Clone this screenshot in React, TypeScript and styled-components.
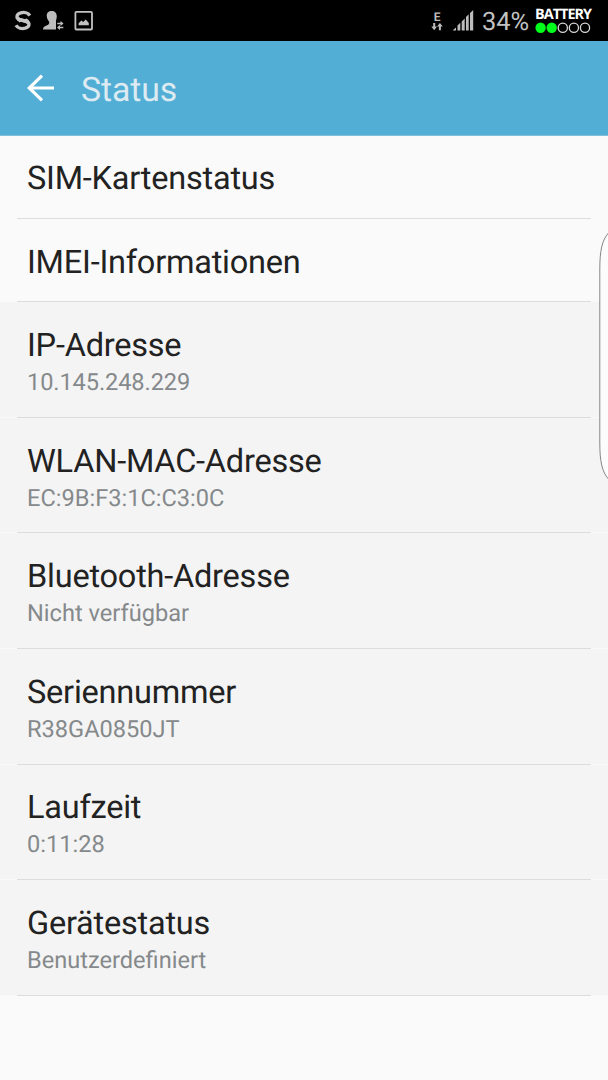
import React from 'react';
import styled, { createGlobalStyle } from 'styled-components';

const GlobalStyle = createGlobalStyle`
  * { box-sizing: border-box; }
  body {
    margin: 0;
    background: #fafafa;
    font-family: Roboto, sans-serif;
    text-rendering: geometricPrecision;
  }
`;

const Screen = styled.div`
  position: relative;
  width: 608px;
  height: 1080px;
  overflow: hidden;
  background: #fafafa;
`;

const StatusBar = styled.div`
  height: 41px;
  padding: 0 16px 0 14px;
  display: flex;
  align-items: center;
  justify-content: space-between;
  background: #000;
`;

const Cluster = styled.div`
  display: flex;
  align-items: center;
  height: 41px;
`;

const Percent = styled.span`
  margin-left: 8px;
  width: 46px;
  font-size: 25.4px;
  line-height: 41px;
  padding-top: 3px;
  white-space: nowrap;
  color: #c2c2c2;
`;

const Network = styled.div`
  margin-right: 9px;
  width: 14px;
  display: flex;
  flex-direction: column;
  align-items: center;
  font-size: 12px;
  font-weight: 700;
  line-height: 12px;
  color: #bcbcbc;
`;

const Battery = styled.div`
  margin-left: 7px;
  width: 57px;
  display: flex;
  flex-direction: column;
`;

const BatteryLabel = styled.span`
  font: 700 14.4px/14px 'Open Sans', sans-serif;
  letter-spacing: -0.95px;
  color: #fff;
  white-space: nowrap;
`;

const ActionBar = styled.header`
  height: 94.5px;
  padding: 0 27px;
  display: flex;
  align-items: center;
  gap: 26px;
  background: #52aed5;
  border-bottom: 1px solid #83bfda;
`;

const Heading = styled.h1`
  margin: 6px 0 0;
  font-size: 33.8px;
  font-weight: 400;
  line-height: 40px;
  letter-spacing: -0.1px;
  color: #dceaf1;
`;

const List = styled.ul`
  margin: 0;
  padding: 0;
  list-style: none;
`;

const Row = styled.li<{ $muted: boolean }>`
  height: ${(p) => (p.$muted ? 115.6 : 83.4)}px;
  padding: 0 17px;
  background: ${(p) => (p.$muted ? '#f4f4f4' : '#fafafa')};
  box-shadow: inset 0 -1px #f9f9f9;
`;

const RowBody = styled.div`
  height: 100%;
  padding: 23.8px 10px 0;
  border-bottom: 1px solid #dcdcdc;
`;

const Title = styled.div`
  font-size: 32.5px;
  line-height: 38px;
  letter-spacing: -0.22px;
  color: #222;
  white-space: nowrap;
`;

const Summary = styled.div<{ $numeric: boolean }>`
  margin-top: 4px;
  font-size: 23.6px;
  line-height: 28px;
  letter-spacing: ${(p) => (p.$numeric ? '-0.1px' : 'normal')};
  color: #85898b;
  white-space: nowrap;
`;

const EdgeHandle = styled.svg`
  position: absolute;
  top: 229px;
  right: 0;
`;

const rows: { title: string; summary?: string }[] = [
  { title: 'SIM-Kartenstatus' },
  { title: 'IMEI-Informationen' },
  { title: 'IP-Adresse', summary: '10.145.248.229' },
  { title: 'WLAN-MAC-Adresse', summary: 'EC:9B:F3:1C:C3:0C' },
  { title: 'Bluetooth-Adresse', summary: 'Nicht verfügbar' },
  { title: 'Seriennummer', summary: 'R38GA0850JT' },
  { title: 'Laufzeit', summary: '0:11:28' },
  { title: 'Gerätestatus', summary: 'Benutzerdefiniert' },
];

const NotificationIcons = () => (
  <svg width="82" height="41" viewBox="14 0 82 41" fill="none">
    <g stroke="#c4c4c4" strokeWidth="3.3">
      <path d="M29.8 15.6C28.2 12.8 24 12 20.8 12.8C16.2 14 15.8 18 19.5 19.3L25 20.8C27 21.4 28.5 22.2 28.9 23.6" />
      <path d="M16 25.2C17.6 28.2 21.8 29 25.2 28.2C29.8 27 30.2 23 26.4 21.6L21 20.1C19 19.5 17.4 18.8 17 17.4" />
    </g>
    <path d="M17.5 19.6L20.5 21.6M28.5 21.2L25.5 19.2" stroke="#c4c4c4" strokeWidth="2" />
    <path d="M51.5 11C47.8 11 46.4 13.6 46.8 16.5C47 18.5 47.9 20.4 49.2 21.7C49.6 24 48.4 24.7 46.5 25.4C44.3 26.2 43 27.2 43 29.5H56V20.8C56.3 19.5 56.8 18 56.8 16.5C56.8 13 54.9 11 51.5 11Z" fill="#bdbdbd" />
    <path d="M56.5 21H64V30H56.5Z" fill="#000" />
    <path d="M57.3 23.4H62.5M58 27.6H63.3" stroke="#bdbdbd" strokeWidth="1.5" />
    <path d="M60.5 20.9L63.5 23.4L60.5 25.9ZM60 25.1L57 27.6L60 30.1Z" fill="#bdbdbd" />
    <rect x="75.4" y="11.9" width="16.6" height="17.6" rx="1" stroke="#c2c2c2" strokeWidth="1.8" />
    <path d="M78.6 25.2V23.2L81.4 20.4L83.2 22L85.8 19.4L88.8 22.9V25.2Z" fill="#c2c2c2" />
  </svg>
);

const DataArrows = () => (
  <svg width="12" height="8" viewBox="0 0 12 8" fill="#bcbcbc">
    <path d="M2.2 0H4.2V3.6H6L3.2 7.2L.3 3.6H2.2ZM7.9 7.2H9.9V3.6H11.8L8.9 0L6 3.6H7.9Z" />
  </svg>
);

const Signal = () => (
  <svg width="21" height="21" viewBox="0 0 21 21" fill="#bcbcbc">
    <path d="M0 20.5V20L3 17.5V20.5ZM4.5 20.5V15.6L7.3 12.8V20.5ZM8.7 20.5V11.4L11.7 8.4V20.5ZM13 20.5V7.1L15.7 4.2V20.5ZM17 20.5V3L20.2 0V20.5Z" />
  </svg>
);

const BatteryDots = () => (
  <svg width="57" height="12" viewBox="0 0 57 12">
    {[0, 1, 2, 3, 4].map((i) => (
      <circle
        key={i}
        cx={5.6 + i * 11.1}
        cy="5.7"
        r={i < 2 ? 5.2 : 4.6}
        fill={i < 2 ? '#00ff1a' : 'none'}
        stroke={i < 2 ? 'none' : '#d8d8d8'}
        strokeWidth="1.3"
      />
    ))}
  </svg>
);

export default function App() {
  return (
    <Screen>
      <GlobalStyle />
      <StatusBar>
        <NotificationIcons />
        <Cluster>
          <Network>
            E
            <DataArrows />
          </Network>
          <Signal />
          <Percent>34%</Percent>
          <Battery>
            <BatteryLabel>BATTERY</BatteryLabel>
            <BatteryDots />
          </Battery>
        </Cluster>
      </StatusBar>
      <ActionBar>
        <svg width="28" height="28" viewBox="0 0 28 28" fill="none" stroke="#fff" strokeWidth="3.2">
          <path d="M15 1.6L2.3 14L15 26.4M2.5 14H27" />
        </svg>
        <Heading>Status</Heading>
      </ActionBar>
      <List>
        {rows.map((row) => (
          <Row key={row.title} $muted={!!row.summary}>
            <RowBody>
              <Title>{row.title}</Title>
              {row.summary && (
                <Summary $numeric={/^[\d.]+$/.test(row.summary)}>{row.summary}</Summary>
              )}
            </RowBody>
          </Row>
        ))}
      </List>
      <EdgeHandle width="9" height="254" viewBox="0 0 9 254">
        <path d="M9.5 4C3 11 .8 22 .8 40V214C.8 232 3 243 9.5 250" fill="#fcfcfc" stroke="#858585" strokeWidth="1" />
      </EdgeHandle>
    </Screen>
  );
}
